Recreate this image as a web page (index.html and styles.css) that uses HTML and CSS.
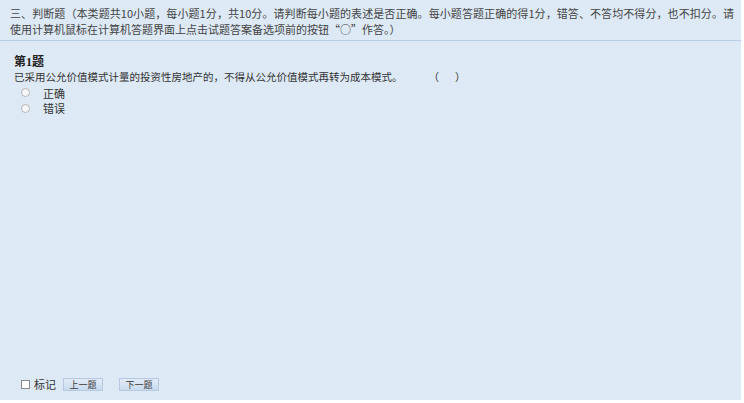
FILE: index.html
```html
<!DOCTYPE html>
<html lang="zh-CN">
<head>
<meta charset="utf-8">
<link rel="stylesheet" href="styles.css">
</head>
<body>
<div class="panel">
  <div class="intro">三、判断题（本类题共10小题，每小题1分，共10分。请判断每小题的表述是否正确。每小题答题正确的得1分，错答、不答均不得分，也不扣分。请使用计算机鼠标在计算机答题界面上点击试题答案备选项前的按钮“○”作答。）</div>
  <div class="question">
    <div class="qtitle">第1题</div>
    <div class="qtext">已采用公允价值模式计量的投资性房地产的，不得从公允价值模式再转为成本模式。<span class="gap"></span>（<span class="blank"></span>）</div>
    <div class="option"><span class="radio"></span><span class="label">正确</span></div>
    <div class="option"><span class="radio"></span><span class="label">错误</span></div>
  </div>
  <div class="footer">
    <span class="check"></span><span class="mark">标记</span>
    <span class="btn">上一题</span>
    <span class="btn">下一题</span>
  </div>
</div>
</body>
</html>
```
FILE: styles.css
```css
html, body {
  margin: 0;
  padding: 0;
  background: #ffffff;
}
body {
  font-family: "Noto Sans CJK SC", "Noto Sans", sans-serif;
  color: #3a3a3a;
}
.panel {
  width: 741px;
  height: 400px;
  background: #dde9f5;
  display: flex;
  flex-direction: column;
}
.intro {
  font-size: 11px;
  line-height: 16px;
  padding: 5px 7px 3px 10px;
  text-align: justify;
  color: #444;
  border-bottom: 1px solid #b9cde6;
}
.question {
  padding: 14px 8px 0 14px;
}
.qtitle {
  font-size: 12px;
  font-weight: bold;
  line-height: 14px;
  color: #222;
  font-family: "Liberation Serif", "Noto Sans CJK SC", serif;
}
.qtext {
  font-size: 10.5px;
  line-height: 16px;
  color: #333;
}
.gap {
  display: inline-block;
  width: 26px;
}
.blank {
  display: inline-block;
  width: 16px;
}
.option {
  display: flex;
  align-items: center;
  height: 15.5px;
  font-size: 11px;
  color: #333;
}
.radio {
  display: inline-block;
  width: 7px;
  height: 7px;
  border: 1px solid #b4b4b4;
  border-radius: 50%;
  background: #f7f7f7;
  margin-left: 7px;
  margin-right: 13px;
}
.footer {
  margin-top: auto;
  display: flex;
  align-items: center;
  padding: 0 0 8px 21px;
  font-size: 11px;
  color: #333;
}
.check {
  display: inline-block;
  width: 7px;
  height: 7px;
  border: 1px solid #8c8c8c;
  background: #ffffff;
  margin-right: 4px;
}
.mark {
  margin-right: 7px;
}
.btn {
  display: inline-block;
  width: 38px;
  height: 11px;
  line-height: 11px;
  font-size: 9px;
  text-align: center;
  border: 1px solid #b6c9e1;
  background: linear-gradient(#e2ecf7, #c9daee);
  color: #3a3a3a;
  margin-right: 16px;
}
```
